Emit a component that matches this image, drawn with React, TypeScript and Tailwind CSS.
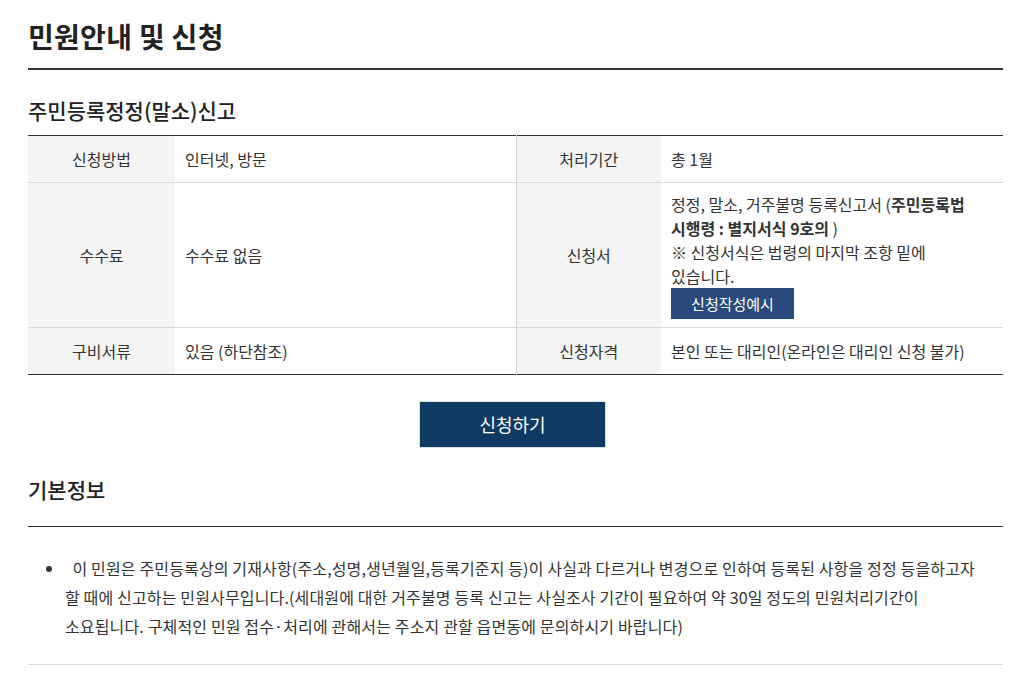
import React from "react";

const font = "font-['Noto_Sans_CJK_KR','Noto_Sans',sans-serif]";

const Th = ({ children }: { children: React.ReactNode }) => (
  <th className="w-[147px] bg-[#f4f4f4] text-center align-middle text-[16px] font-normal text-[#333]">
    {children}
  </th>
);

const App = () => {
  return (
    <div className={`${font} min-h-[677px] bg-white px-[28px] pt-[14px] text-[#333]`}>
      <div className="w-[975px]">
        <h1 className="h-[56px] border-b-2 border-[#333] text-[28px] font-bold leading-[44px] tracking-[0.3px] text-[#222]">
          민원안내 및 신청
        </h1>

        <h2 className="mt-[25px] text-[21px] font-medium leading-[30px] text-[#222]">
          주민등록정정(말소)신고
        </h2>

        <table className="mt-[10px] w-full border-collapse border-y border-y-[#333] text-[16px] leading-[24px]">
          <tbody>
            <tr className="border-b border-[#d9d9d9]">
              <Th>신청방법</Th>
              <td className="w-[341px] px-[10px] py-[11px]">인터넷, 방문</td>
              <th className="w-[145px] border-l border-[#d9d9d9] bg-[#f4f4f4] text-center text-[16px] font-normal">
                처리기간
              </th>
              <td className="px-[10px] py-[11px]">총 1월</td>
            </tr>
            <tr className="border-b border-[#d9d9d9]">
              <Th>수수료</Th>
              <td className="px-[10px]">수수료 없음</td>
              <th className="border-l border-[#d9d9d9] bg-[#f4f4f4] text-center text-[16px] font-normal">
                신청서
              </th>
              <td className="px-[10px] pt-[9px] pb-[8px]">
                <p className="whitespace-nowrap">
                  정정, 말소, 거주불명 등록신고서 (<b className="font-bold">주민등록법</b>
                  <br />
                  <b className="font-bold">시행령 : 별지서식 9호의</b> )
                </p>
                <p className="whitespace-nowrap">
                  ※ 신청서식은 법령의 마지막 조항 밑에
                  <br />
                  있습니다.
                </p>
                <button className="block h-[31px] w-[123px] bg-[#284a7c] text-[15px] leading-[31px] text-white">
                  신청작성예시
                </button>
              </td>
            </tr>
            <tr>
              <Th>구비서류</Th>
              <td className="px-[10px] py-[11px]">있음 (하단참조)</td>
              <th className="border-l border-[#d9d9d9] bg-[#f4f4f4] text-center text-[16px] font-normal">
                신청자격
              </th>
              <td className="whitespace-nowrap px-[10px] py-[11px]">
                본인 또는 대리인(온라인은 대리인 신청 불가)
              </td>
            </tr>
          </tbody>
        </table>

        <div className="mt-[26px] flex justify-center pr-[6px]">
          <button className="h-[47px] w-[187px] border border-[#dddddd] bg-[#0f3a63] text-[18px] text-white">
            신청하기
          </button>
        </div>

        <h2 className="mt-[26px] h-[53px] border-b border-[#333] text-[21px] font-medium leading-[30px] text-[#222]">
          기본정보
        </h2>

        <ul className="list-disc border-b border-[#d9d9d9] pt-[27px] pb-[23px] pl-[37px] text-[16px] leading-[29px] tracking-[0.15px] marker:text-[#333]">
          <li className="whitespace-nowrap">
            {"\u00a0 "}이 민원은 주민등록상의 기재사항(주소,성명,생년월일,등록기준지 등)이 사실과 다르거나 변경으로 인하여 등록된 사항을 정정 등을하고자
            <br />
            할 때에 신고하는 민원사무입니다.(세대원에 대한 거주불명 등록 신고는 사실조사 기간이 필요하여 약 30일 정도의 민원처리기간이
            <br />
            소요됩니다. 구체적인 민원 접수·처리에 관해서는 주소지 관할 읍면동에 문의하시기 바랍니다)
          </li>
        </ul>
      </div>
    </div>
  );
};

export default App;
